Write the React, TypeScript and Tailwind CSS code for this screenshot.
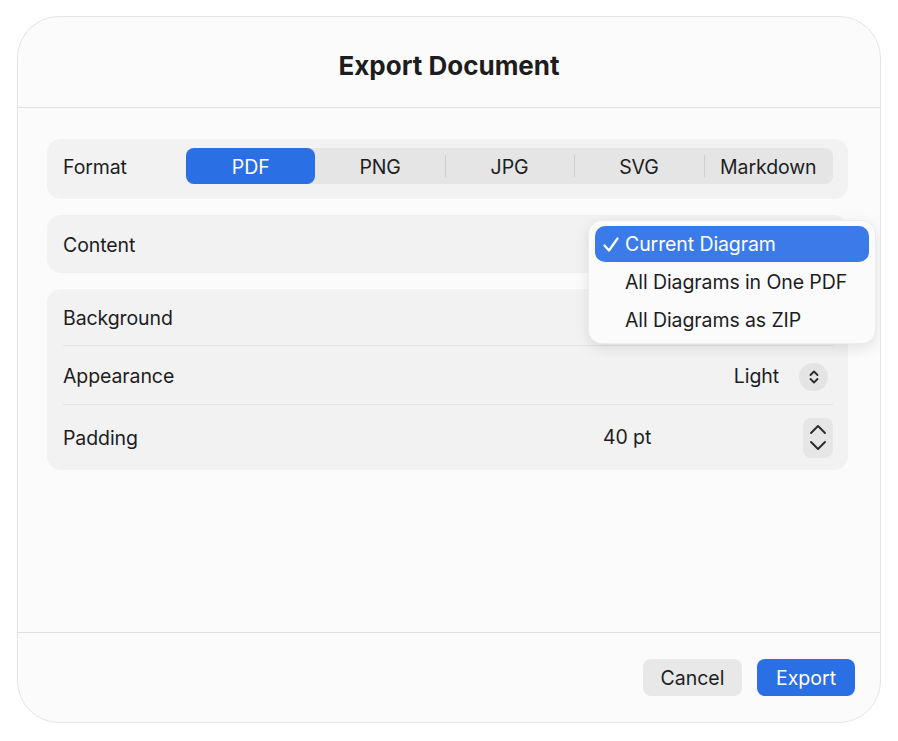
import React from "react";

const font = { fontFamily: "Inter, 'Noto Sans', 'Liberation Sans', sans-serif" };

function Seg({ label, selected, divider }: { label: string; selected?: boolean; divider?: boolean }) {
  return (
    <div className="relative flex-1 h-full flex items-center justify-center pt-[3px]">
      {divider && <div className="absolute left-0 top-[7px] bottom-[7px] w-px bg-[#cfcfcf]" />}
      {selected ? (
        <div className="absolute inset-0 rounded-[8px] bg-[#2a6fe3] flex items-center justify-center text-white pt-[3px]">
          {label}
        </div>
      ) : (
        <span className="text-[#1d1d1f]">{label}</span>
      )}
    </div>
  );
}

function SmallUpDown() {
  return (
    <svg width="14" height="18" viewBox="0 0 14 18" fill="none" stroke="#2a2a2a" strokeWidth="1.8" strokeLinecap="round" strokeLinejoin="round">
      <path d="M3.5 7 L7 3.5 L10.5 7" />
      <path d="M3.5 11 L7 14.5 L10.5 11" />
    </svg>
  );
}

export default function App() {
  return (
    <div className="w-[898px] h-[741px] bg-white pt-[16px] pl-[17px]" style={font}>
      <div className="w-[864px] h-[707px] rounded-[42px] border border-[#e7e3e7] bg-[#fbfbfb] flex flex-col overflow-hidden text-[#1d1d1f]">
        {/* header */}
        <div className="h-[91px] shrink-0 border-b border-[#e0e0e0] flex justify-center pt-[32px]">
          <h1 className="text-[26px] leading-[34px] font-bold text-[#1d1d1f]">Export Document</h1>
        </div>

        {/* body */}
        <div className="flex-1 pl-[29px] pt-[31px] flex flex-col gap-[16px] text-[19.5px] tracking-[-0.005em]">
          {/* Format */}
          <div className="w-[801px] h-[60px] rounded-[14px] bg-[#f2f2f2] flex items-start pt-[9px] pl-[16px] pr-[15px]">
            <div className="w-[123px] h-[36px] flex items-center pt-[4px]">Format</div>
            <div className="flex-1 h-[36px] rounded-[8px] bg-[#e5e5e5] flex">
              <Seg label="PDF" selected />
              <Seg label="PNG" />
              <Seg label="JPG" divider />
              <Seg label="SVG" divider />
              <Seg label="Markdown" divider />
            </div>
          </div>

          {/* Content */}
          <div className="relative w-[801px] h-[58px] rounded-[14px] bg-[#f2f2f2] flex items-center pl-[16px] pt-[3px]">
            <span>Content</span>
            <div className="absolute left-[541px] top-[5px] w-[288px] h-[124px] rounded-[14px] bg-[#fbfbfb] border border-[#ececec] shadow-[0_4px_14px_rgba(0,0,0,0.10)] px-[6px] pt-[5px] z-10">
              <div className="h-[36px] rounded-[10px] bg-[#3b7be9] text-white flex items-center pt-[2px]">
                <span className="w-[30px] pl-[7px] flex items-center">
                  <svg width="18" height="18" viewBox="0 0 18 18" fill="none" stroke="white" strokeWidth="2.2" strokeLinecap="round" strokeLinejoin="round">
                    <path d="M2.5 9.5 L7 14.5 L15.5 2.5" />
                  </svg>
                </span>
                <span>Current Diagram</span>
              </div>
              <div className="h-[39px] flex items-center pl-[30px] pt-[3px]">All Diagrams in One PDF</div>
              <div className="h-[37px] flex items-center pl-[30px] pt-[3px]">All Diagrams as ZIP</div>
            </div>
          </div>

          {/* Settings */}
          <div className="w-[801px] rounded-[14px] bg-[#f2f2f2] px-[16px] pr-[15px] flex flex-col">
            <div className="h-[57px] flex items-center border-b border-[#e3e3e3] pt-[4px]">Background</div>
            <div className="h-[59px] flex items-center justify-between border-b border-[#e3e3e3] pt-[4px]">
              <span>Appearance</span>
              <div className="flex items-center">
                <span className="mr-[20px]">Light</span>
                <div className="w-[29px] h-[28px] rounded-full bg-[#e4e4e4] flex items-center justify-center mr-[5px]">
                  <SmallUpDown />
                </div>
              </div>
            </div>
            <div className="h-[65px] flex items-center justify-between pt-[1px]">
              <span className="pt-[2px]">Padding</span>
              <div className="flex items-center">
                <span className="w-[200px]">40 pt</span>
                <div className="w-[30px] h-[40px] rounded-[8px] bg-[#e6e6e6] flex flex-col items-center justify-center">
                  <svg width="18" height="34" viewBox="0 0 18 34" fill="none" stroke="#2a2a2a" strokeWidth="1.9" strokeLinecap="round" strokeLinejoin="round">
                    <path d="M2 12 L9 5 L16 12" />
                    <path d="M2 21 L9 28 L16 21" />
                  </svg>
                </div>
              </div>
            </div>
          </div>
        </div>

        {/* footer */}
        <div className="h-[90px] shrink-0 border-t border-[#e0e0e0] flex items-center justify-end pr-[25px] gap-[15px] text-[19.5px]">
          <button className="w-[99px] h-[37px] rounded-[8px] bg-[#e8e8e8] text-[#1d1d1f] pt-[3px]">Cancel</button>
          <button className="w-[98px] h-[37px] rounded-[8px] bg-[#2a6fe3] text-white pt-[3px]">Export</button>
        </div>
      </div>
    </div>
  );
}
